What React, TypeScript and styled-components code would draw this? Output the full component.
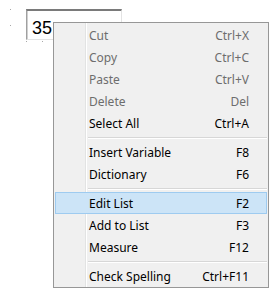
import React from "react";
import styled, { createGlobalStyle } from "styled-components";

const Global = createGlobalStyle`
  html, body { margin: 0; padding: 0; background: #ffffff; }
  body { width: 271px; height: 290px; overflow: hidden; position: relative; }
`;

const dot = (x: number, y: number) =>
  `radial-gradient(circle at ${x + 0.5}px ${y + 0.5}px, #a8a8a8 0.7px, transparent 1px)`;

const Surface = styled.div`
  position: relative;
  width: 271px;
  height: 290px;
  background-color: #ffffff;
  background-image: ${[dot(10, 9), dot(10, 25), dot(26, 41), dot(42, 41)].join(", ")};
  padding: 9px 0 0 26px;
  box-sizing: border-box;
`;

const TextBox = styled.div`
  width: 96px;
  height: 31px;
  box-sizing: border-box;
  background: #ffffff;
  border-style: solid;
  border-width: 2px 1px 1px 1px;
  border-color: #7a7a7a #e3e3e3 #e3e3e3 #a0a0a0;
  box-shadow: inset 1px 0 0 #d0d0d0;
  font-family: "Liberation Sans", Arial, sans-serif;
  font-size: 18px;
  line-height: 20px;
  color: #000000;
  padding: 7px 0 0 5px;
`;

const Menu = styled.div`
  position: absolute;
  left: 53px;
  top: 22px;
  width: 216px;
  box-sizing: border-box;
  border: 1px solid #979797;
  background-color: #f0f0f0;
  background-image: linear-gradient(
    to right,
    transparent 31px,
    #e2e3e3 31px,
    #e2e3e3 32px,
    #ffffff 32px,
    #ffffff 33px,
    transparent 33px
  );
  padding: 1px 1px 0 1px;
  font-family: "Noto Sans", "Segoe UI", sans-serif;
  font-size: 12px;
  display: flex;
  flex-direction: column;
`;

const Row = styled.div<{ $disabled?: boolean; $active?: boolean }>`
  height: 22px;
  box-sizing: border-box;
  display: flex;
  align-items: center;
  justify-content: space-between;
  padding: 0 17px 0 33px;
  color: ${(p) => (p.$disabled ? "#6d6d6d" : "#000000")};
  background: ${(p) => (p.$active ? "#cce4f7" : "transparent")};
  border: 1px solid ${(p) => (p.$active ? "#9ecbf0" : "transparent")};
  white-space: nowrap;
`;

const Label = styled.span``;
const Shortcut = styled.span``;

const Separator = styled.div`
  height: 7px;
  display: flex;
  align-items: center;
  padding-left: 33px;
  &::before {
    content: "";
    flex: 1;
    height: 1px;
    background: #d7d7d7;
    border-bottom: 1px solid #ffffff;
  }
`;

type Item = { label?: string; shortcut?: string; disabled?: boolean; active?: boolean; sep?: boolean };

const items: Item[] = [
  { label: "Cut", shortcut: "Ctrl+X", disabled: true },
  { label: "Copy", shortcut: "Ctrl+C", disabled: true },
  { label: "Paste", shortcut: "Ctrl+V", disabled: true },
  { label: "Delete", shortcut: "Del", disabled: true },
  { label: "Select All", shortcut: "Ctrl+A" },
  { sep: true },
  { label: "Insert Variable", shortcut: "F8" },
  { label: "Dictionary", shortcut: "F6" },
  { sep: true },
  { label: "Edit List", shortcut: "F2", active: true },
  { label: "Add to List", shortcut: "F3" },
  { label: "Measure", shortcut: "F12" },
  { sep: true },
  { label: "Check Spelling", shortcut: "Ctrl+F11" },
];

export default function App() {
  return (
    <>
      <Global />
      <Surface>
        <TextBox>35</TextBox>
        <Menu>
          {items.map((it, i) =>
            it.sep ? (
              <Separator key={i} />
            ) : (
              <Row key={i} $disabled={it.disabled} $active={it.active}>
                <Label>{it.label}</Label>
                <Shortcut>{it.shortcut}</Shortcut>
              </Row>
            )
          )}
        </Menu>
      </Surface>
    </>
  );
}
